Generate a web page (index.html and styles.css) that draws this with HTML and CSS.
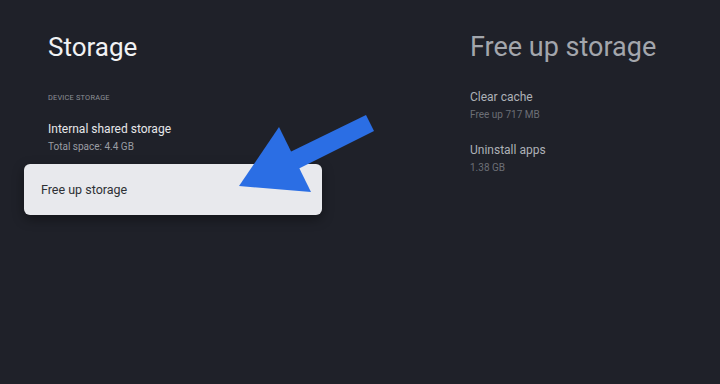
FILE: index.html
```html
<!DOCTYPE html>
<html lang="en">
<head>
    <meta charset="UTF-8">
    <meta name="viewport" content="width=device-width, initial-scale=1.0">
    <title>Storage</title>
    <link rel="stylesheet" href="styles.css">
</head>
<body>

<div class="screen">
    <div class="panel panel-left">
        <h1 class="title">Storage</h1>
        <div class="section-label">DEVICE STORAGE</div>
        <div class="item">
            <div class="item-title">Internal shared storage</div>
            <div class="item-sub">Total space: 4.4 GB</div>
        </div>
        <div class="card">Free up storage</div>
    </div>

    <div class="panel panel-right">
        <h1 class="title title-dim">Free up storage</h1>
        <div class="item item-first">
            <div class="item-title dim">Clear cache</div>
            <div class="item-sub dim">Free up 717 MB</div>
        </div>
        <div class="item">
            <div class="item-title dim">Uninstall apps</div>
            <div class="item-sub dim">1.38 GB</div>
        </div>
    </div>

    <svg class="arrow" width="720" height="384" viewBox="0 0 720 384">
        <polygon points="366,115 374,131 292,172 284,155" fill="#2b6ee4"/>
        <polygon points="279,127 239,186 311,192" fill="#2b6ee4"/>
    </svg>
</div>

</body>
</html>
```

FILE: styles.css
```css
body {
    margin: 0;
    padding: 0;
    background-color: #1f2129;
    font-family: Roboto, "Noto Sans", sans-serif;
}

.screen {
    position: relative;
    display: grid;
    grid-template-columns: 422px 1fr;
    width: 720px;
    height: 384px;
    padding-left: 48px;
    box-sizing: border-box;
    overflow: hidden;
}

.panel {
    padding-top: 30px;
}

.title {
    margin: 0;
    font-size: 26px;
    font-weight: 400;
    line-height: 34px;
    color: #f1f2f4;
}

.title-dim {
    font-size: 27px;
    color: #a3a6ac;
}

.section-label {
    margin-top: 29px;
    font-size: 7.4px;
    letter-spacing: 0.2px;
    color: #8d9096;
}

.item {
    margin-top: 19px;
}

.item-first {
    margin-top: 25px;
}

.panel-right .item + .item {
    margin-top: 21px;
}

.item-title {
    font-size: 12px;
    line-height: 16px;
    color: #e6e7ea;
}

.item-sub {
    margin-top: 4px;
    font-size: 10px;
    line-height: 12px;
    color: #9a9da3;
}

.item-title.dim {
    color: #aeb1b7;
}

.item-sub.dim {
    color: #6c6f76;
}

.card {
    width: 298px;
    height: 51px;
    margin-top: 11px;
    margin-left: -24px;
    padding-left: 17px;
    box-sizing: border-box;
    display: flex;
    align-items: center;
    border-radius: 6px;
    background-color: #e8e9ed;
    box-shadow: 0 4px 12px rgba(0, 0, 0, 0.4);
    font-size: 12.5px;
    color: #2e3035;
}

.arrow {
    position: absolute;
    left: 0;
    top: 0;
}
```
